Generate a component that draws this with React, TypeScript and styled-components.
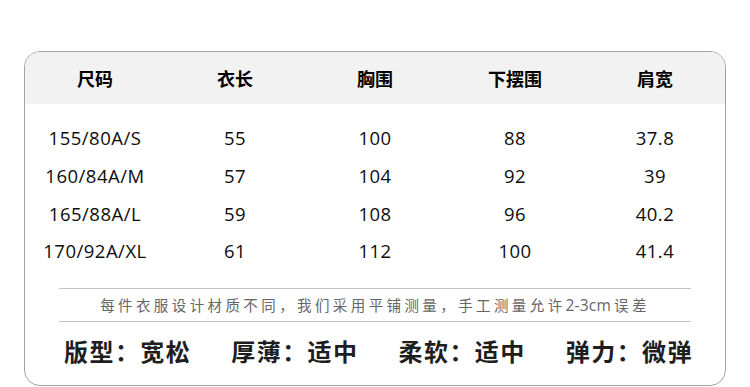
import React from "react";
import styled, { createGlobalStyle } from "styled-components";

const Global = createGlobalStyle`
  html, body { margin: 0; padding: 0; background: #ffffff; }
  body { font-family: "Open Sans", "Noto Sans CJK SC", sans-serif; }
`;

const Page = styled.div`
  width: 750px;
  height: 387px;
  padding: 51px 0 0 24px;
  box-sizing: border-box;
  overflow: hidden;
`;

const Card = styled.div`
  width: 702px;
  height: 335px;
  box-sizing: border-box;
  border: 1px solid #a3a3a3;
  border-radius: 16px;
  overflow: hidden;
  display: flex;
  flex-direction: column;
`;

const Grid = styled.div`
  display: grid;
  grid-template-columns: repeat(5, 140px);
  align-items: center;
  justify-items: center;
`;

const HeaderRow = styled(Grid)`
  height: 52px;
  background: #f2f2f2;
`;

const HeadCell = styled.div`
  font-family: "Noto Sans CJK SC", sans-serif;
  font-weight: 700;
  font-size: 18px;
  color: #000;
`;

const Body = styled.div`
  padding-top: 15px;
`;

const DataRow = styled(Grid)`
  height: 37.7px;
`;

const Cell = styled.div`
  font-family: "Open Sans", "Noto Sans CJK SC", sans-serif;
  font-size: 18.5px;
  letter-spacing: 0.5px;
  color: #0d0d0d;
`;

const Note = styled.div`
  margin: 18px 34px 0;
  height: 32px;
  border-top: 1px solid #c4c4c4;
  border-bottom: 1px solid #c4c4c4;
  display: flex;
  align-items: center;
  justify-content: center;
  font-family: "Open Sans", "Noto Sans CJK SC", sans-serif;
  font-size: 14.5px;
  letter-spacing: 3.4px;
  color: #666;
`;

const Latin = styled.span`
  font-size: 15.5px;
  letter-spacing: 0.2px;
  margin-right: 3px;
`;

const Attrs = styled.div`
  flex: 1;
  display: flex;
  align-items: center;
  gap: 40px;
  padding: 0 0 6px 39px;
`;

const Attr = styled.div`
  font-family: "Noto Sans CJK SC", sans-serif;
  font-weight: 700;
  font-size: 24px;
  letter-spacing: 1.45px;
  color: #1e1e1e;
  white-space: nowrap;
`;

const headers = ["尺码", "衣长", "胸围", "下摆围", "肩宽"];
const rows = [
  ["155/80A/S", "55", "100", "88", "37.8"],
  ["160/84A/M", "57", "104", "92", "39"],
  ["165/88A/L", "59", "108", "96", "40.2"],
  ["170/92A/XL", "61", "112", "100", "41.4"],
];
const attrs = ["版型：宽松", "厚薄：适中", "柔软：适中", "弹力：微弹"];

export default function App() {
  return (
    <>
      <Global />
      <Page>
        <Card>
          <HeaderRow>
            {headers.map((h) => (
              <HeadCell key={h}>{h}</HeadCell>
            ))}
          </HeaderRow>
          <Body>
            {rows.map((r) => (
              <DataRow key={r[0]}>
                {r.map((c, i) => (
                  <Cell key={i}>{c}</Cell>
                ))}
              </DataRow>
            ))}
          </Body>
          <Note>
            每件衣服设计材质不同，我们采用平铺测量，手工测量允许<Latin>2-3cm</Latin>误差
          </Note>
          <Attrs>
            {attrs.map((a) => (
              <Attr key={a}>{a}</Attr>
            ))}
          </Attrs>
        </Card>
      </Page>
    </>
  );
}
